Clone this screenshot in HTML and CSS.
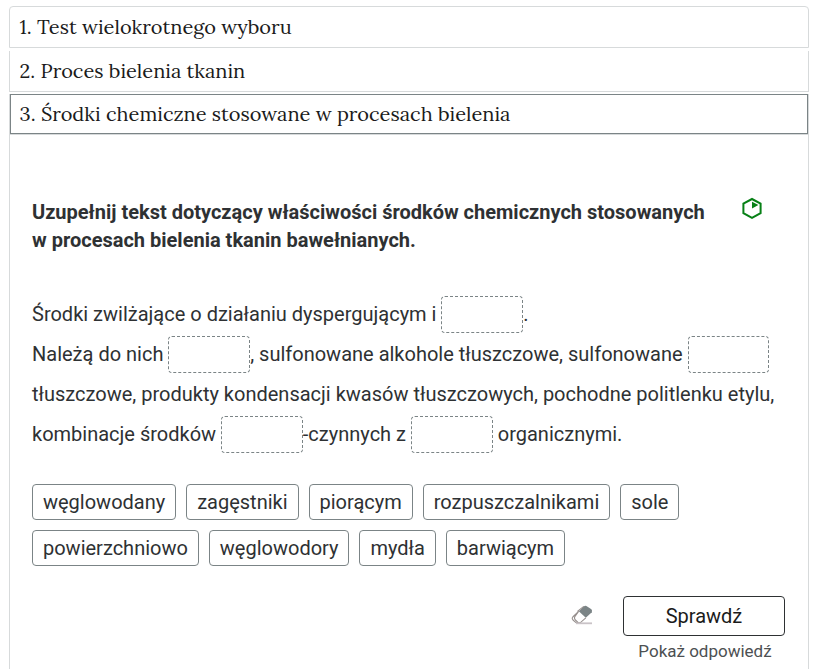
FILE: index.html
```html
<!DOCTYPE html>
<html lang="pl">
<head>
  <meta charset="UTF-8">
  <title>Środki chemiczne stosowane w procesach bielenia</title>
  <link rel="stylesheet" href="styles.css">
</head>
<body>
  <div class="accordion">
    <!-- Exercise headers -->
    <div class="tab first">1. Test wielokrotnego wyboru</div>
    <div class="tab second">2. Proces bielenia tkanin</div>
    <div class="tab active">3. Środki chemiczne stosowane w procesach bielenia</div>

    <!-- Open exercise -->
    <div class="panel">
      <div class="task">
        <h2>Uzupełnij tekst dotyczący właściwości środków chemicznych stosowanych<br>w procesach bielenia tkanin bawełnianych.</h2>
        <svg class="level" width="22" height="22" viewBox="0 0 22 22">
          <path d="M11 2 L19.6 6.6 V16.2 L11 20.8 L2.4 16.2 V6.6 Z" fill="none" stroke="#078016" stroke-width="2"/>
          <path d="M11 4.8 L17.4 8 L11 11.4 Z" fill="#078016"/>
        </svg>
      </div>

      <p class="text">
        Środki zwilżające o działaniu dyspergującym i <span class="gap"></span>.<br>
        Należą do nich <span class="gap"></span>, sulfonowane alkohole tłuszczowe, sulfonowane <span class="gap"></span><br>
        tłuszczowe, produkty kondensacji kwasów tłuszczowych, pochodne politlenku etylu,<br>
        kombinacje środków <span class="gap"></span>-czynnych z <span class="gap"></span> organicznymi.
      </p>

      <div class="words">
        <span class="word">węglowodany</span>
        <span class="word">zagęstniki</span>
        <span class="word">piorącym</span>
        <span class="word">rozpuszczalnikami</span>
        <span class="word">sole</span>
        <span class="word">powierzchniowo</span>
        <span class="word">węglowodory</span>
        <span class="word">mydła</span>
        <span class="word">barwiącym</span>
      </div>

      <!-- Actions -->
      <div class="actions">
        <svg class="eraser" width="22" height="20" viewBox="0 0 22 20">
          <path d="M7.8 6.2 L12.8 1.4 Q14 .4 15.4 1 L20.4 4.2 Q21.4 5.2 20.8 7.2 L14.8 12.8 Z" fill="#7b8486"/>
          <path d="M7.8 6.2 L1.8 12 Q.6 13.4 2 15 L5.2 17.8 H9.2 L14.8 12.8 M7.8 6.2 L3.8 11.8 Q3 13.4 4.4 15 L7.2 17.6 M12.8 1.4 L6.4 6.4" fill="none" stroke="#968f8d" stroke-width="1.1"/>
          <path d="M5 18.3 H21" stroke="#c9c3c7" stroke-width="1.8"/>
        </svg>
        <div class="check">
          <button>Sprawdź</button>
          <a>Pokaż odpowiedź</a>
        </div>
      </div>
    </div>
  </div>
</body>
</html>
```
FILE: styles.css
```css
* { margin: 0; padding: 0; box-sizing: border-box; }
body {
  font-family: Roboto, "Liberation Sans", sans-serif; font-size: 20px;
  color: #2e3133; background-color: #fff; overflow: hidden;
}

.accordion {
  display: flex; flex-direction: column;
  width: 800px; height: 669px; margin-left: 9px; padding-top: 6px;
}

/* Headers */
.tab {
  display: flex; align-items: center; padding: 0 0 2px 9.6px;
  border: 1px solid #d7dadb; color: #1b1b1b;
  font-family: Lora, "Liberation Serif", serif; font-size: 20px; white-space: nowrap;
}
.first { height: 42px; border-radius: 4px 4px 0 0; }
.second { height: 41px; margin-top: 3px; border-top: none; }
.active { height: 40px; margin-top: 2px; border-width: 0 1px; box-shadow: inset 0 0 0 1px #7b8486; }

/* Panel */
.panel { flex: 1; padding: 63px 23px 0 22px; border: 1px solid #d7dadb; border-bottom: none; }
.task { display: flex; justify-content: space-between; padding-right: 22px; }
h2 { font-size: 20px; line-height: 28px; font-weight: 700; white-space: nowrap; }
.level { margin-top: -1px; }

.text { margin-top: 40px; line-height: 40px; white-space: nowrap; }
.gap {
  display: inline-block; width: 81.8px; height: 37px; vertical-align: -12px;
  border: 1px dashed #7b8486; border-radius: 4px;
}

.words { display: flex; flex-wrap: wrap; gap: 10px; margin-top: 30px; }
.word {
  height: 36px; padding: 0 9.98px; line-height: 34px;
  border: 1px solid #7b8486; border-radius: 4px;
}

/* Buttons */
.actions { display: flex; justify-content: flex-end; margin-top: 30px; }
.eraser { margin: 9px 30px 0 0; }
.check { display: flex; flex-direction: column; align-items: center; width: 162px; }
button {
  width: 162px; height: 40px; font: inherit; color: #1b1b1b;
  background-color: #fff; border: 1px solid #2e3133; border-radius: 4px;
}
.check a { margin: 5px 0 0 2px; font-size: 17px; line-height: 20px; color: #4d5052; }
```
